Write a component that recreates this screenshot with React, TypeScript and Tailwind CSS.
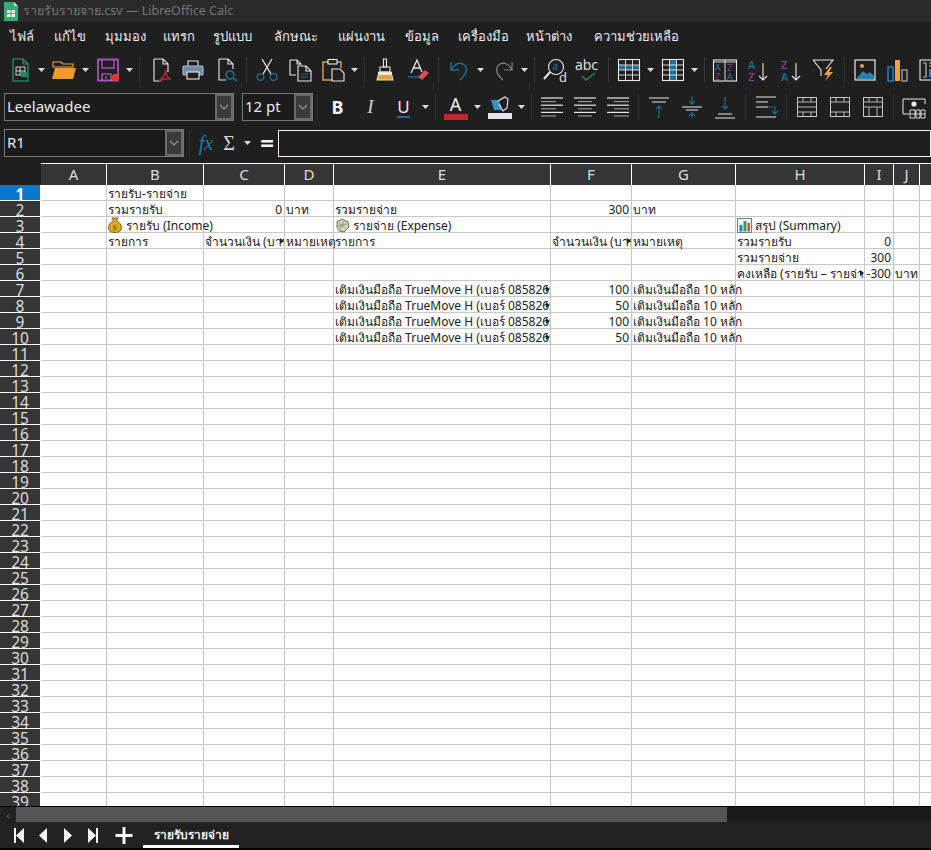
import type { ReactNode } from "react";

const menus = [
  { label: "ไฟล์", w: "w-[44px]" },
  { label: "แก้ไข", w: "w-[51px]" },
  { label: "มุมมอง", w: "w-[58px]" },
  { label: "แทรก", w: "w-[50px]" },
  { label: "รูปแบบ", w: "w-[61px]" },
  { label: "ลักษณะ", w: "w-[64px]" },
  { label: "แผ่นงาน", w: "w-[67px]" },
  { label: "ข้อมูล", w: "w-[53px]" },
  { label: "เครื่องมือ", w: "w-[68px]" },
  { label: "หน้าต่าง", w: "w-[68px]" },
  { label: "ความช่วยเหลือ", w: "w-[120px]" },
];

const columns = ["A", "B", "C", "D", "E", "F", "G", "H", "I", "J", ""];
const rows = Array.from({ length: 39 }, (_, i) => i + 1);

const BLUE = "#2a7fb0";
const TEAL = "#1d6f96";
const PURPLE = "#8a3f9c";

const Btn = ({ children }: { children: ReactNode }) => (
  <div className="flex h-[33px] w-[33px] shrink-0 items-center justify-center">{children}</div>
);

const Caret = () => (
  <div className="flex h-[33px] w-[11px] shrink-0 items-center justify-center">
    <svg width="7" height="4" viewBox="0 0 7 4">
      <path d="M0 0h7L3.500 4z" fill="#dcdcdc" />
    </svg>
  </div>
);

const Sep = () => (
  <div className="flex h-[26px] w-[8px] shrink-0 justify-center">
    <div className="h-full w-px bg-[#363636]" />
  </div>
);

const Icon = ({ children }: { children: ReactNode }) => (
  <svg width="26" height="26" viewBox="0 0 26 26" fill="none" stroke="#e8e8e8" strokeWidth="1.100">
    {children}
  </svg>
);

const Chevron = () => (
  <svg width="10" height="6" viewBox="0 0 10 6" fill="none" stroke="#9a9a9a" strokeWidth="1.200">
    <path d="M1 1l4 4 4-4" />
  </svg>
);

const Combo = ({ text, outer, drop }: { text: string; outer: string; drop: string }) => (
  <div className={`flex shrink-0 items-stretch border border-[#777] bg-[#1b1b1b] ${outer}`}>
    <div className="flex-1 pl-[2px] text-[15px] leading-[25px] text-[#ececec]">{text}</div>
    <div className={`flex items-center justify-center border-2 border-[#6a6a6a] bg-[#3a3a3a] ${drop}`}>
      <Chevron />
    </div>
  </div>
);

const AlignIcon = ({ kind }: { kind: "l" | "c" | "r" }) => {
  const short = kind === "l" ? [1, 16] : kind === "c" ? [5, 19] : [8, 23];
  const lines = [[1, 23], short, [1, 23], short, [1, 23], short];
  return (
    <Icon>
      {lines.map(([a, b], i) => (
        <path key={i} d={`M${a + 1} ${4 + i * 3.600}H${b + 1}`} strokeWidth={i % 2 ? 1 : 1.200} stroke={i % 2 ? "#a8a8a8" : "#e8e8e8"} />
      ))}
    </Icon>
  );
};

const GridIcon = ({ band }: { band: "row" | "col" }) => (
  <Icon>
    {band === "row" ? <rect x="2" y="8" width="21" height="5" fill={TEAL} stroke="none" /> : <rect x="9" y="3" width="7" height="20" fill={TEAL} stroke="none" />}
    <rect x="2.500" y="2.500" width="21" height="21" />
    <path d="M2.500 8h21M2.500 13h21M2.500 18h21M9.500 2.500v21M16.500 2.500v21" strokeWidth=".9" />
  </Icon>
);

const VAlignIcon = ({ kind }: { kind: "t" | "m" | "b" }) => (
  <Icon>
    {kind === "t" && (
      <>
        <path d="M3 4h20M6 8h14" />
        <path d="M13 24V12M10 15l3-3 3 3" stroke={TEAL} />
      </>
    )}
    {kind === "m" && (
      <>
        <path d="M3 13h20M7 16h12" />
        <path d="M13 2v8M10 7l3 3 3-3M13 24v-5M10 22l3-3 3 3" stroke={TEAL} />
      </>
    )}
    {kind === "b" && (
      <>
        <path d="M3 24h20M6 20h14" />
        <path d="M13 3v12M10 12l3 3 3-3" stroke={TEAL} />
      </>
    )}
  </Icon>
);

const BorderIcon = ({ inner }: { inner: string }) => (
  <Icon>
    <rect x="3.500" y="3.500" width="19" height="19" strokeWidth="1" stroke="#c8c8c8" />
    <path d={inner} strokeWidth=".9" stroke="#c8c8c8" />
  </Icon>
);

const Toolbar1 = () => (
  <div className="flex h-[36px] items-center pl-[3px]">
    <Btn>
      <Icon>
        <path d="M6 2h10l5 5v17H6z" stroke="#2fa36f" />
        <path d="M16 2v5h5" stroke="#2fa36f" />
        <rect x="9" y="10" width="9" height="8" stroke="#cfe9da" strokeWidth=".9" />
        <path d="M9 14h9M13 10v8" stroke="#cfe9da" strokeWidth=".9" />
        <rect x="14" y="15" width="6" height="5" fill="#1f8a5b" stroke="none" />
      </Icon>
    </Btn>
    <Caret />
    <Btn>
      <Icon>
        <path d="M2 5h8l2 2h10v3H2z" fill="#1f1f1f" stroke="#f3a344" />
        <path d="M4 11h21l-3 11H1z" fill="#f39a2d" stroke="none" />
      </Icon>
    </Btn>
    <Caret />
    <Btn>
      <Icon>
        <path d="M3 2.500h20v21H3z" stroke="#a94fb8" strokeWidth="1.800" />
        <path d="M7 3v8h12V3" stroke="#a94fb8" strokeWidth="1.400" />
        <path d="M7 24v-7h9v7M11 19v3" stroke="#b779c2" />
        <circle cx="20.500" cy="20.500" r="3.800" fill="#e3382f" stroke="none" />
      </Icon>
    </Btn>
    <Caret />
    <Sep />
    <div className="w-px" />
    <Btn>
      <Icon>
        <path d="M7 2h9l5 5v8M16 2v5h5M7 2v22h7" />
        <path d="M19 13c-1 5-3 8-7 11 4-2 7-3 12-2-4-1-5-5-5-9z" stroke="#b02a35" strokeWidth="1.400" />
      </Icon>
    </Btn>
    <Btn>
      <Icon>
        <path d="M8 9V4h10v5" />
        <rect x="3" y="9" width="20" height="9" rx="1" fill="#6d8ea4" stroke="#a9bccb" />
        <rect x="7" y="15" width="12" height="7" fill="#1f1f1f" />
      </Icon>
    </Btn>
    <Btn>
      <Icon>
        <path d="M6 2h9l5 5v5M15 2v5h5M6 2v21h7" />
        <circle cx="17" cy="18" r="4" stroke={TEAL} strokeWidth="1.600" />
        <path d="M20 21l4 3" stroke={TEAL} strokeWidth="1.600" />
      </Icon>
    </Btn>
    <Sep />
    <Btn>
      <Icon>
        <path d="M8 2l9 15M18 2L9 17" strokeWidth="1.300" />
        <circle cx="6.500" cy="20" r="3.300" stroke={TEAL} strokeWidth="1.300" />
        <circle cx="19.500" cy="20" r="3.300" stroke={TEAL} strokeWidth="1.300" />
      </Icon>
    </Btn>
    <Btn>
      <Icon>
        <path d="M3 3h7l4 4v1M3 3v15h6M10 3v4h4" />
        <path d="M11 9h8l5 5v10H11zM19 9v5h5" />
        <path d="M14 17h7M14 20h7" stroke={TEAL} />
      </Icon>
    </Btn>
    <Btn>
      <Icon>
        <path d="M8 5H3v18h9M17 5h4v6" stroke="#e89a42" strokeWidth="1.400" />
        <rect x="8" y="2.500" width="9" height="4.500" />
        <path d="M12 12h8l4 4v8H12z" />
      </Icon>
    </Btn>
    <Caret />
    <Sep />
    <Btn>
      <Icon>
        <path d="M11.500 2h3v8h-3z" />
        <path d="M8 10h10v5H8z" />
        <path d="M5 23l2-8h12l2 8z" fill="#e0a04a" stroke="#f3d9a8" />
        <path d="M6 15h14v3H6z" fill="#efe7d8" stroke="none" />
      </Icon>
    </Btn>
    <Btn>
      <Icon>
        <path d="M6 16L12 3l5 12M8 11h7" strokeWidth="1.300" />
        <path d="M3 20h10" stroke={TEAL} strokeWidth="1.400" />
        <path d="M13 20l7-7 4 3-7 7z" fill="#dd4d58" stroke="none" />
      </Icon>
    </Btn>
    <Sep />
    <Btn>
      <Icon>
        <path d="M5 5v8h8" stroke={TEAL} strokeWidth="1.400" />
        <path d="M5 13c3-6 8-8 12-6 5 3 4 9 0 13l-3 3" stroke={TEAL} strokeWidth="1.400" />
      </Icon>
    </Btn>
    <Caret />
    <Btn>
      <Icon>
        <path d="M22 5v8h-8" stroke="#858585" strokeWidth="1.200" />
        <path d="M22 13c-3-6-8-8-12-6-5 3-4 9 0 13l3 3" stroke="#858585" strokeWidth="1.200" />
      </Icon>
    </Btn>
    <Caret />
    <Sep />
    <Btn>
      <Icon>
        <circle cx="14" cy="10" r="7.500" />
        <path d="M8 15l-6 7" strokeWidth="2" />
        <text x="10.500" y="13" fontSize="10" fill={BLUE} stroke="none" fontFamily="Open Sans">a</text>
        <text x="17" y="25" fontSize="13" fill="#e8e8e8" stroke="none" fontFamily="Open Sans">d</text>
      </Icon>
    </Btn>
    <Btn>
      <Icon>
        <text x="0" y="13" fontSize="14" fill="#e8e8e8" stroke="none" fontFamily="Open Sans">abc</text>
        <path d="M7 19l4 4 9-7" stroke="#1f8a5b" strokeWidth="1.500" />
      </Icon>
    </Btn>
    <Sep />
    <Btn>
      <GridIcon band="row" />
    </Btn>
    <Caret />
    <Btn>
      <GridIcon band="col" />
    </Btn>
    <Caret />
    <Sep />
    <Btn>
      <Icon>
        <rect x="1.500" y="3" width="23" height="21" strokeWidth="1.100" />
        <path d="M1.500 5h23M13 3v21" strokeWidth=".9" />
        <text x="3" y="14" fontSize="9" fill={BLUE} stroke="none" fontFamily="Open Sans">A</text>
        <text x="3" y="22.500" fontSize="9" fill={PURPLE} stroke="none" fontFamily="Open Sans">Z</text>
        <text x="15" y="14" fontSize="9" fill={PURPLE} stroke="none" fontFamily="Open Sans">Z</text>
        <text x="15" y="22.500" fontSize="9" fill={BLUE} stroke="none" fontFamily="Open Sans">A</text>
      </Icon>
    </Btn>
    <Btn>
      <Icon>
        <text x="3" y="12" fontSize="11" fill={TEAL} stroke="none" fontFamily="Open Sans" fontWeight="600">A</text>
        <text x="3" y="24" fontSize="11" fill={PURPLE} stroke="none" fontFamily="Open Sans" fontWeight="600">Z</text>
        <path d="M18 6v17M14 19l4 4 4-4" />
      </Icon>
    </Btn>
    <Btn>
      <Icon>
        <text x="3" y="12" fontSize="11" fill={PURPLE} stroke="none" fontFamily="Open Sans" fontWeight="600">Z</text>
        <text x="3" y="24" fontSize="11" fill={TEAL} stroke="none" fontFamily="Open Sans" fontWeight="600">A</text>
        <path d="M18 6v17M14 19l4 4 4-4" />
      </Icon>
    </Btn>
    <Btn>
      <Icon>
        <path d="M2 3h20l-7 9M2 3l8 10v6" />
        <path d="M19 10l-6 8h4l-3 6 8-9h-4l3-5z" fill="#e9a33a" stroke="none" />
      </Icon>
    </Btn>
    <Sep />
    <Btn>
      <Icon>
        <rect x="3" y="3" width="20" height="20" strokeWidth="1.200" />
        <path d="M4 22l7-8 4 3 3-2 4 4v3z" fill={BLUE} stroke="none" />
        <circle cx="10" cy="9" r="2" fill="#e7a24a" stroke="none" />
      </Icon>
    </Btn>
    <Btn>
      <Icon>
        <rect x="3" y="10" width="5" height="14" stroke="#2f8fd0" strokeWidth="1.300" />
        <rect x="10" y="3" width="5" height="21" fill="#f0a140" stroke="none" />
        <rect x="17" y="13" width="5" height="11" stroke="#a8a8a8" strokeWidth="1.300" />
      </Icon>
    </Btn>
    <Btn>
      <Icon>
        <rect x="2" y="3" width="21" height="20" />
        <path d="M5 6h3v14H5M11 6h9v3h-9" strokeWidth="1.200" stroke="#bdbdbd" />
        <rect x="11" y="12" width="9" height="8" fill={BLUE} stroke="none" />
      </Icon>
    </Btn>
  </div>
);

const Toolbar2 = () => (
  <div className="flex h-[34px] items-center pl-[4px]">
    <Combo text="Leelawadee" outer="h-[28px] w-[230px]" drop="w-[18px]" />
    <div className="w-[8px] shrink-0" />
    <Combo text="12 pt" outer="h-[28px] w-[71px]" drop="w-[18px]" />
    <Sep />
    <Btn>
      <span className="text-[18px] font-bold text-[#f5f5f5]">B</span>
    </Btn>
    <Btn>
      <span className="font-['Liberation_Serif',serif] text-[19px] italic text-[#cfcfcf]">I</span>
    </Btn>
    <Btn>
      <span className="border-b-2 border-[#1d6f96] text-[17px] leading-[19px] text-[#e8e8e8]">U</span>
    </Btn>
    <Caret />
    <Sep />
    <Btn>
      <div className="flex w-[24px] flex-col items-center">
        <span className="text-[18px] leading-[19px] text-[#f2f2f2]">A</span>
        <div className="h-[6px] w-full bg-[#c1272d]" />
      </div>
    </Btn>
    <Caret />
    <Btn>
      <div className="flex w-[24px] flex-col items-center">
        <svg width="20" height="17" viewBox="0 0 20 17" fill="none" stroke="#e8e8e8" strokeWidth="1.100">
          <path d="M1 4h8l3 10H4z" fill="#3a8fc4" stroke="none" />
          <path d="M8 5l7-4 3 2-1 9-4 3-4-7" />
        </svg>
        <div className="h-[6px] w-full bg-[#e4e4ea]" />
      </div>
    </Btn>
    <Caret />
    <Sep />
    <Btn>
      <AlignIcon kind="l" />
    </Btn>
    <Btn>
      <AlignIcon kind="c" />
    </Btn>
    <Btn>
      <AlignIcon kind="r" />
    </Btn>
    <Sep />
    <Btn>
      <VAlignIcon kind="t" />
    </Btn>
    <Btn>
      <VAlignIcon kind="m" />
    </Btn>
    <Btn>
      <VAlignIcon kind="b" />
    </Btn>
    <Sep />
    <Btn>
      <Icon>
        <path d="M3 3h20M3 8h12M3 13h12M3 23h20" strokeWidth="1.100" />
        <path d="M15 13h7v6M19 17l3 3 3-3" stroke={TEAL} />
      </Icon>
    </Btn>
    <Sep />
    <Btn>
      <BorderIcon inner="M3 8h20M3 13h20M3 18h20M9 3v5M17 3v5M9 18v5M17 18v5" />
    </Btn>
    <Btn>
      <BorderIcon inner="M3 8h20M3 18h20M9 18v5M17 18v5M9 3v5M17 3v5" />
    </Btn>
    <Btn>
      <BorderIcon inner="M3 8h20M3 13h20M9 3v5M17 3v5M9 13v10M17 13v10" />
    </Btn>
    <Sep />
    <Btn>
      <Icon>
        <path d="M2 16V5h22v5M2 16v4h6" strokeWidth="1" />
        <circle cx="13" cy="10" r="2.600" fill="#e8e8e8" stroke="none" />
        <path d="M9 16h5v8H9zM15 16h4v8h-4zM20 16h4v8h-4zM9 20h15" strokeWidth=".9" />
      </Icon>
    </Btn>
  </div>
);

const FormulaBar = () => (
  <div className="flex h-[30px] items-center pl-[4px]">
    <Combo text="R1" outer="h-[28px] w-[180px]" drop="w-[18px]" />
    <div className="flex h-[26px] w-[10px] shrink-0 justify-center">
      <div className="h-full w-px bg-[#363636]" />
    </div>
    <div className="w-[24px] shrink-0 text-center font-['Liberation_Serif',serif] text-[20px] italic leading-[28px] text-[#1f7ba8]">fx</div>
    <div className="mr-[2px] w-[22px] shrink-0 text-center font-['Liberation_Serif',serif] text-[20px] leading-[28px] text-[#d8d8d8]">Σ</div>
    <Caret />
    <div className="w-[4px] shrink-0" />
    <div className="mr-[1px] w-[20px] shrink-0 text-center text-[24px] font-bold leading-[28px] text-[#f2f2f2]">=</div>
    <div className="h-[27px] flex-1 border border-[#f2f2f2] bg-[#1f1f1f]" />
  </div>
);

const Cell = ({ children, right, clip }: { children?: ReactNode; right?: boolean; clip?: boolean }) => (
  <div
    className={`relative h-[16px] whitespace-nowrap border-b border-r border-[#c8c8c8] pl-[1px] pr-[2px] text-[12px] leading-[17px] text-[#222] ${right ? "text-right" : ""} ${clip ? "overflow-hidden" : ""}`}
  >
    {children}
    {clip && (
      <span className="absolute right-0 top-[5px] h-0 w-0 border-y-[3px] border-l-[4px] border-y-transparent border-l-[#222]" />
    )}
  </div>
);

const MoneyBag = () => (
  <svg width="14" height="16" viewBox="0 0 14 16" className="mr-[4px] inline-block align-[-3px]">
    <path d="M4 1h6L8.500 4c3 1 5 4 5 7 0 3-3 4.500-6.500 4.500S.5 14 .5 11c0-3 2-6 5-7z" fill="#e0a81c" stroke="#6b4e0c" strokeWidth=".8" />
    <text x="4.500" y="13" fontSize="8" fill="#7a5a10" fontFamily="Open Sans">$</text>
  </svg>
);

const ExpenseIcon = () => (
  <svg width="15" height="15" viewBox="0 0 15 15" className="mr-[3px] inline-block align-[-3px]">
    <path d="M2 4l5-3 6 3 1 5-5 5-5-1-2-4z" fill="#cfd7b8" stroke="#55604a" strokeWidth=".9" />
    <path d="M4 5l6 5M9 3L5 11M3 8l9-2" stroke="#7f8a6c" strokeWidth=".8" />
  </svg>
);

const SummaryIcon = () => (
  <svg width="15" height="15" viewBox="0 0 15 15" className="mr-[3px] inline-block align-[-3px]">
    <rect x=".5" y=".5" width="14" height="14" fill="#f4f6f8" stroke="#6f8190" />
    <rect x="2.500" y="7" width="3" height="6.500" fill="#2f7fc4" />
    <rect x="6.500" y="3" width="3" height="10.500" fill="#3ba24a" />
    <rect x="10.500" y="5" width="2.500" height="8.500" fill="#d8453a" />
  </svg>
);

const topUp = "เติมเงินมือถือ TrueMove H (เบอร์ 085826";

const cellContent = (row: number, col: string) => {
  const key = `${col}${row}`;
  const map: Record<string, { node: ReactNode; right?: boolean; clip?: boolean }> = {
    B1: { node: "รายรับ-รายจ่าย" },
    B2: { node: "รวมรายรับ" },
    C2: { node: "0", right: true },
    D2: { node: "บาท" },
    E2: { node: "รวมรายจ่าย" },
    F2: { node: "300", right: true },
    G2: { node: "บาท" },
    B3: { node: (<><MoneyBag />รายรับ (Income)</>) },
    E3: { node: (<><ExpenseIcon />รายจ่าย (Expense)</>) },
    H3: { node: (<><SummaryIcon />สรุป (Summary)</>) },
    B4: { node: "รายการ" },
    C4: { node: "จำนวนเงิน (บาท)", clip: true },
    D4: { node: "หมายเหตุ" },
    E4: { node: "รายการ" },
    F4: { node: "จำนวนเงิน (บาท)", clip: true },
    G4: { node: "หมายเหตุ" },
    H4: { node: "รวมรายรับ" },
    I4: { node: "0", right: true },
    H5: { node: "รวมรายจ่าย" },
    I5: { node: "300", right: true },
    H6: { node: "คงเหลือ (รายรับ – รายจ่าย)", clip: true },
    I6: { node: "-300", right: true },
    J6: { node: "บาท" },
  };
  if (row >= 7 && row <= 10) {
    const amount = row % 2 === 1 ? "100" : "50";
    if (col === "E") return { node: `${topUp}xxxx)`, clip: true };
    if (col === "F") return { node: amount, right: true };
    if (col === "G") return { node: "เติมเงินมือถือ 10 หลัก" };
  }
  return map[key];
};

const Sheet = () => (
  <div className="min-h-0 flex-1 overflow-hidden bg-white">
    <div className="grid grid-cols-[41px_66px_97px_81px_49px_217px_81px_104px_129px_29px_26px_12px]">
      <div className="h-[22px] bg-[#1f1f1f]" />
      {columns.map((c) => (
        <div key={c} className="h-[22px] border-r border-t border-white bg-[#353535] text-center text-[15px] leading-[21px] text-[#dcdcdc]">
          {c}
        </div>
      ))}
      {rows.map((row) => (
        <div key={row} className="contents">
          <div
            className={`h-[16px] overflow-hidden border-b border-r border-white text-center text-[15.500px] leading-[18px] ${row === 1 ? "bg-[#0a78c8] font-bold text-white" : "bg-[#353535] text-[#dcdcdc]"}`}
          >
            {row}
          </div>
          {columns.map((col) => {
            const content = cellContent(row, col);
            return (
              <Cell key={col} right={content?.right} clip={content?.clip}>
                {content?.node}
              </Cell>
            );
          })}
        </div>
      ))}
    </div>
  </div>
);

const TabBar = () => (
  <div className="flex h-[26px] shrink-0 items-center bg-[#222]">
    <div className="flex h-full w-[143px] items-center">
      <svg width="143" height="26" viewBox="0 0 143 26" fill="#f4f4f4">
        <path d="M14 6h2v15h-2zM24 6v15l-8-7.500z" />
        <path d="M47 6v15l-8-7.500z" />
        <path d="M64 6v15l8-7.500z" />
        <path d="M88 6v15l8-7.500zM96 6h2v15h-2z" />
        <path d="M122.500 5h3v7h7v3h-7v7h-3v-7h-7v-3h7z" />
      </svg>
    </div>
    <div className="flex h-full w-[96px] items-center justify-center border-b-[3px] border-white pt-[3px] text-[12px] font-bold text-[#f0f0f0]">
      รายรับรายจ่าย
    </div>
  </div>
);

export default function App() {
  return (
    <div className="flex h-[850px] w-[931px] flex-col overflow-hidden bg-[#1f1f1f] font-['Noto_Sans','Open_Sans',sans-serif]">
      <div className="flex h-[22px] shrink-0 items-center bg-[#2b2b2b] pl-[3px] text-[12.500px] text-[#747474]">
        <svg width="16" height="19" viewBox="0 0 16 19" className="mr-[4px]">
          <path d="M1 0h10l4 4v15H1z" fill="#2fae72" />
          <path d="M11 0v4h4z" fill="#b6e6cd" />
          <rect x="4" y="8" width="8" height="7" fill="#eaf7f0" />
          <path d="M4 11.500h8M8 8v7" stroke="#2fae72" />
        </svg>
        รายรับรายจ่าย.csv — LibreOffice Calc
      </div>
      <div className="flex h-[30px] shrink-0 items-center pl-[10px] text-[13px] text-[#ededed]">
        {menus.map((m) => (
          <div key={m.label} className={`shrink-0 whitespace-nowrap ${m.w}`}>
            {m.label}
          </div>
        ))}
      </div>
      <Toolbar1 />
      <div className="h-[2px] shrink-0" />
      <Toolbar2 />
      <div className="h-[4px] shrink-0" />
      <FormulaBar />
      <div className="h-[5px] shrink-0" />
      <Sheet />
      <div className="flex h-[16px] shrink-0 border-t border-black bg-[#1a1a1a]">
        <div className="flex w-[16px] items-center justify-center bg-[#232323] text-[11px] leading-none text-[#666]">‹</div>
        <div className="w-[711px] bg-[#555]" />
      </div>
      <TabBar />
      <div className="h-[2px] shrink-0 bg-black" />
    </div>
  );
}
